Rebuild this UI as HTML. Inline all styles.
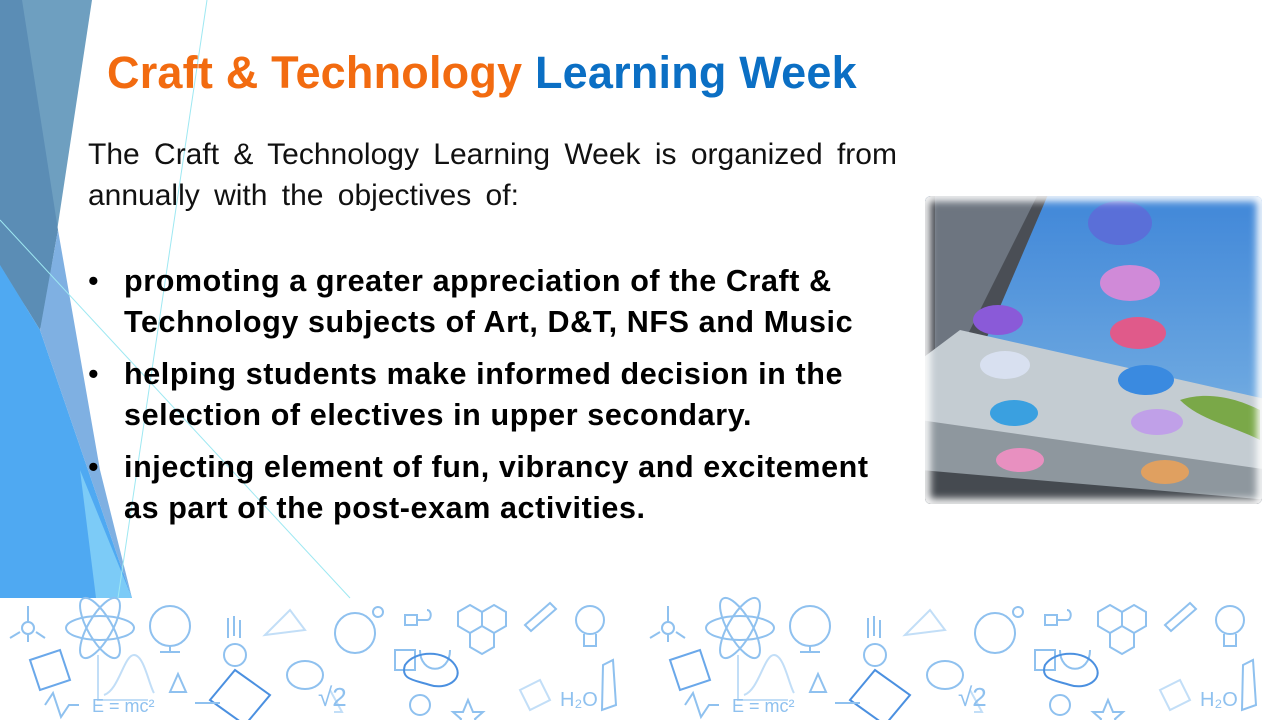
<!DOCTYPE html>
<html><head><meta charset="utf-8"><style>
html,body{margin:0;padding:0;}
body{width:1280px;height:720px;position:relative;overflow:hidden;background:#fff;font-family:"Liberation Sans",Arial,sans-serif;}
.abs{position:absolute;}
h1{position:absolute;left:107px;top:47px;margin:0;font-size:45px;font-weight:bold;letter-spacing:0.2px;white-space:nowrap;}
.intro{left:88px;top:134px;font-size:30px;line-height:41px;color:#111;white-space:nowrap;word-spacing:6px;}
.bul{left:88px;font-size:30.5px;font-weight:bold;line-height:41px;color:#000;white-space:nowrap;letter-spacing:0.6px;}
.bul span.d{position:absolute;left:0;top:0;font-weight:normal;}
.bul div{padding-left:36px;}
</style></head><body>
<svg class="abs" style="left:0;top:0" width="1280" height="720">
  <polygon points="0,0 92,0 42,330 0,270" fill="#6e9fc0"/>
  <polygon points="0,0 22,0 58,230 40,330 0,265" fill="#5b8db5"/>
  <polygon points="0,265 40,330 132,598 0,598" fill="#4fa9f2"/>
  <polygon points="40,330 58,230 100,470 132,598" fill="#7fb0e2"/>
  <polygon points="80,470 132,598 96,598" fill="#7ccbf7"/>
  <line x1="207" y1="0" x2="118" y2="598" stroke="#9ee8f2" stroke-width="1"/>
  <line x1="0" y1="220" x2="350" y2="598" stroke="#9ee8f2" stroke-width="1"/>
  <defs>
    <linearGradient id="sky" x1="0" y1="0" x2="0" y2="1">
      <stop offset="0" stop-color="#3f86d8"/><stop offset="0.6" stop-color="#6aa6e0"/><stop offset="1" stop-color="#9cc2e6"/>
    </linearGradient>
    <filter id="soft"><feGaussianBlur stdDeviation="4"/></filter>
    <clipPath id="pc"><rect x="925" y="196" width="337" height="308" rx="6"/></clipPath>
    <g id="dd" fill="none" stroke="#8fc1ef" stroke-width="2">
      <circle cx="28" cy="628" r="6"/><line x1="28" y1="606" x2="28" y2="622"/><line x1="20" y1="632" x2="10" y2="638"/><line x1="36" y1="632" x2="45" y2="638"/><line x1="28" y1="634" x2="28" y2="642"/>
      <ellipse cx="100" cy="628" rx="34" ry="12"/><ellipse cx="100" cy="628" rx="34" ry="12" transform="rotate(60 100 628)"/><ellipse cx="100" cy="628" rx="34" ry="12" transform="rotate(-60 100 628)"/>
      <circle cx="170" cy="626" r="20"/><path d="M160 652h20M170 646v6"/>
      <path d="M228 618v20M234 616v20M240 620v18"/><circle cx="235" cy="655" r="11"/>
      <path d="M265 635l25-25 15 20z" stroke="#c2def7"/>
      <circle cx="355" cy="633" r="20"/><circle cx="378" cy="612" r="5"/>
      <path d="M405 615h12v10h-12zM417 620h10c5 0 5-10 0-10"/>
      <path d="M395 650h20v20h-20z"/><path d="M420 650c0 25 30 25 30 0"/>
      <path d="M470 605l12 7v14l-12 7-12-7v-14zM494 605l12 7v14l-12 7-12-7v-14zM482 626l12 7v14l-12 7-12-7v-14z"/>
      <path d="M525 625l25-22 6 6-25 22z"/>
      <circle cx="590" cy="620" r="14"/><path d="M584 634v12h12v-12"/>
      <path d="M30 660l30-10 10 30-30 10z" stroke="#6aa8ea"/>
      <path d="M98 655v45h50" stroke="#c2def7"/><path d="M104 695c15-5 20-40 30-40s15 30 20 38" stroke="#c2def7"/>
      <path d="M170 692l8-18 8 18z"/>
      <path d="M210 700l25-30 35 25-25 30z" stroke="#4b90e0"/>
      <ellipse cx="305" cy="675" rx="18" ry="14"/>
      <path d="M405 665c10-15 40-15 50 0s-10 25-25 20-30-5-25-20z" stroke="#4b90e0"/>
      <path d="M330 690l12 22-8 0" stroke="#c2def7"/>
      <path d="M45 705l8-12 8 24 8-12h10"/>
      <path d="M195 703l25 0"/><circle cx="420" cy="705" r="10"/>
      <path d="M468 700l5 12 10 0-8 7 3 10-10-6-10 6 3-10-8-7 10 0z"/>
      <path d="M520 690l20-10 10 20-20 10z" stroke="#c2def7"/>
      <path d="M603 665l10-5 3 45-14 5z" stroke="#8fc1ef"/>
    </g>
  </defs>
  <use href="#dd"/>
  <use href="#dd" x="640"/>
  <g fill="#8fc1ef" font-family="Liberation Sans, sans-serif" font-size="18">
    <text x="92" y="712">E = mc²</text><text x="732" y="712">E = mc²</text>
    <text x="318" y="706" font-size="26">√2</text><text x="958" y="706" font-size="26">√2</text>
    <text x="560" y="706" font-size="20">H₂O</text><text x="1200" y="706" font-size="20">H₂O</text>
  </g>
  <g clip-path="url(#pc)">
    <rect x="920" y="190" width="350" height="320" fill="url(#sky)"/>
    <polygon points="920,190 1050,190 960,400 920,400" fill="#4a4e55"/>
    <polygon points="935,190 1040,190 950,370 935,370" fill="#6d7580"/>
    <polygon points="960,330 1270,400 1270,520 920,520 920,360" fill="#c4ccd2"/>
    <polygon points="920,420 1270,470 1270,520 920,520" fill="#8e979e"/>
    <polygon points="920,470 1270,500 1270,520 920,520" fill="#454a50"/>
    <path d="M1180 400c30-10 60 0 80 10l0 30c-30-15-60-20-80-40z" fill="#7aa848"/>
    <g>
      <ellipse cx="1120" cy="223" rx="32" ry="22" fill="#5a6fd8"/>
      <ellipse cx="1130" cy="283" rx="30" ry="18" fill="#d08ad8"/>
      <ellipse cx="1138" cy="333" rx="28" ry="16" fill="#e05a8a"/>
      <ellipse cx="1146" cy="380" rx="28" ry="15" fill="#3a8ae0"/>
      <ellipse cx="1157" cy="422" rx="26" ry="13" fill="#c0a0e8"/>
      <ellipse cx="1165" cy="472" rx="24" ry="12" fill="#e0a060"/>
      <ellipse cx="998" cy="320" rx="25" ry="15" fill="#8a5ad8"/>
      <ellipse cx="1005" cy="365" rx="25" ry="14" fill="#d8e0f0"/>
      <ellipse cx="1014" cy="413" rx="24" ry="13" fill="#3aa0e0"/>
      <ellipse cx="1020" cy="460" rx="24" ry="12" fill="#e890c0"/>
    </g>
    <rect x="925" y="196" width="337" height="308" fill="none" stroke="#fff" stroke-width="10" filter="url(#soft)"/>
  </g>
</svg>
<h1><span style="color:#f26b10">Craft &amp; Technology</span> <span style="color:#0b6fc4">Learning Week</span></h1>
<div class="abs intro">The Craft &amp; Technology Learning Week is organized from<br>annually with the objectives of:</div>
<div class="abs bul" style="top:261px"><span class="d">•</span><div>promoting a greater appreciation of the Craft &amp;<br>Technology subjects of Art, D&amp;T, NFS and Music</div></div>
<div class="abs bul" style="top:354px"><span class="d">•</span><div>helping students make informed decision in the<br>selection of electives in upper secondary.</div></div>
<div class="abs bul" style="top:447px"><span class="d">•</span><div>injecting element of fun, vibrancy and excitement<br>as part of the post-exam activities.</div></div>
</body></html>
